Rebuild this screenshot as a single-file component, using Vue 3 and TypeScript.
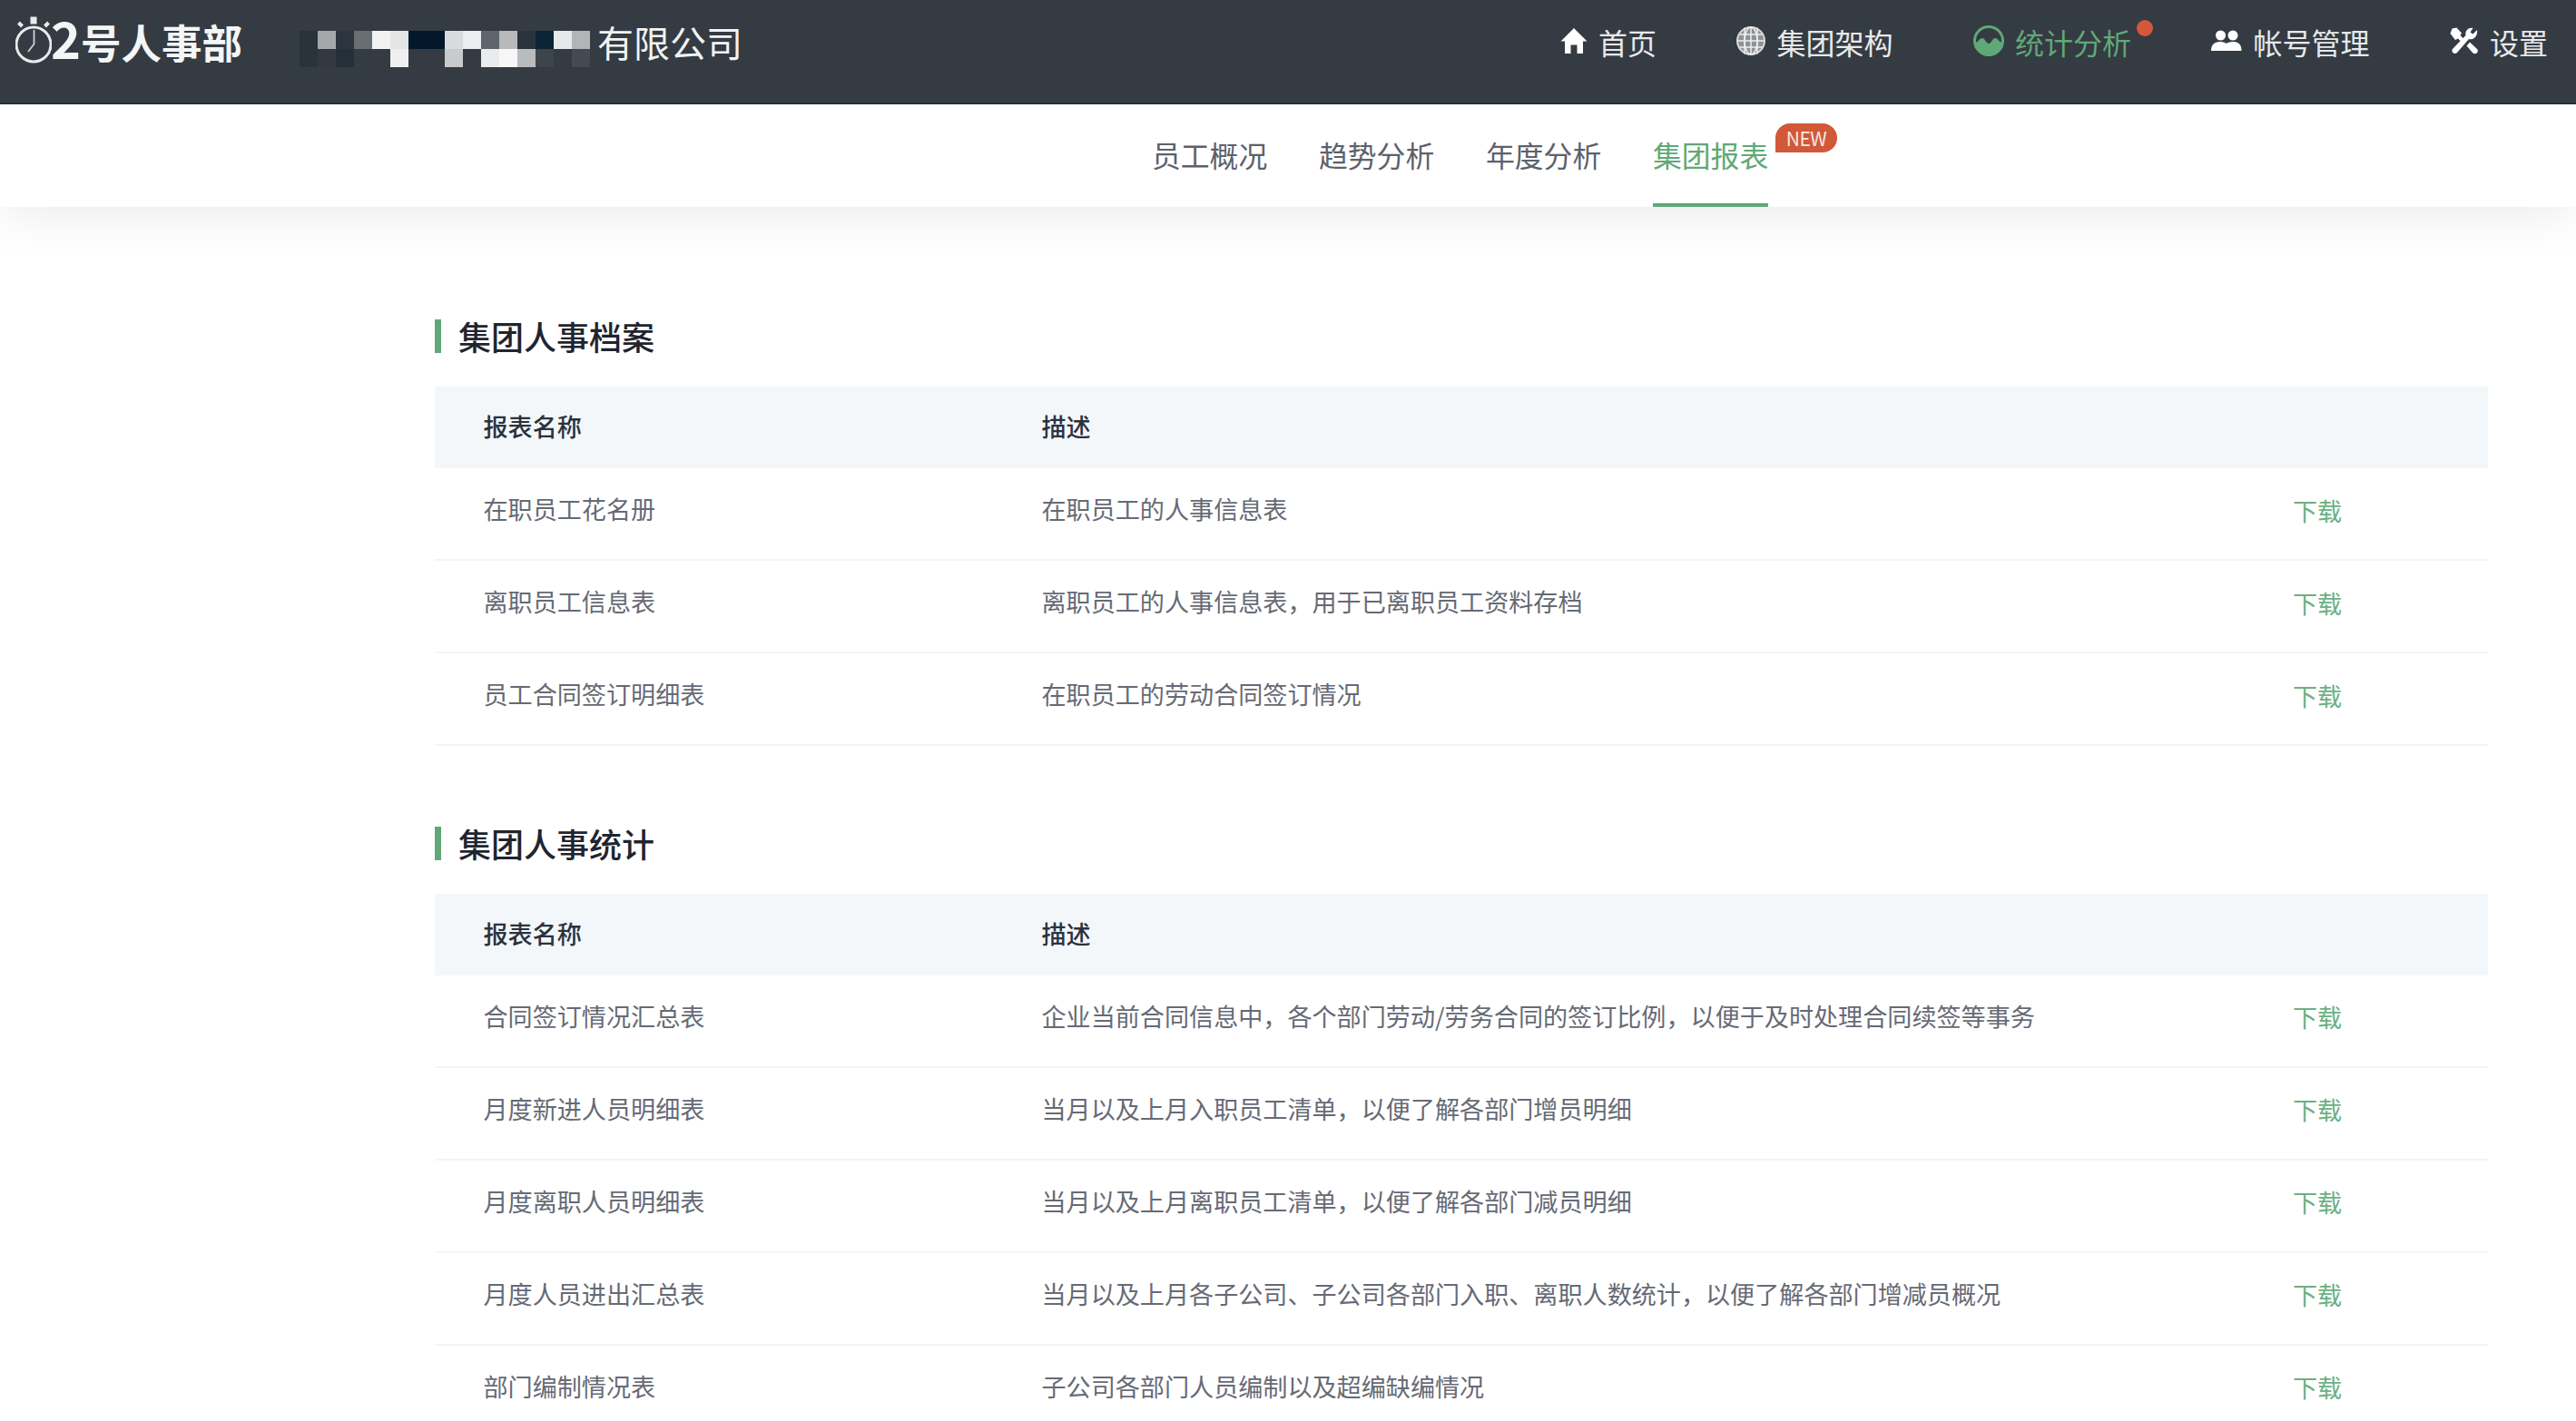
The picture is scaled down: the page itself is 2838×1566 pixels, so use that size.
<script setup lang="ts">
const mosaicTop = ['#2a323a','#a5a8aa','#2c343d','#696e73','#f2f2f2','#e4e5e7','#03182a','#03182a','#d9dadc','#ecedee','#5f656c','#b7b9bb','#2b333c','#0b2435','#e7e8ea','#b3b4b7']
const mosaicBottom = ['#2a323a','#323942','#252f3a','#353b43','#353b43','#efefef','#353b43','#353b43','#c9cacc','#353b43','#ebebeb','#f7f7f7','#b9bcbd','#3d444c','#353b43','#454a52']
const mosaic = [...mosaicTop, ...mosaicBottom]

const subTabs = [
  { label: '员工概况', active: false },
  { label: '趋势分析', active: false },
  { label: '年度分析', active: false },
  { label: '集团报表', active: true },
]

const sections = [
  {
    title: '集团人事档案',
    rows: [
      ['在职员工花名册', '在职员工的人事信息表'],
      ['离职员工信息表', '离职员工的人事信息表，用于已离职员工资料存档'],
      ['员工合同签订明细表', '在职员工的劳动合同签订情况'],
    ],
  },
  {
    title: '集团人事统计',
    rows: [
      ['合同签订情况汇总表', '企业当前合同信息中，各个部门劳动/劳务合同的签订比例，以便于及时处理合同续签等事务'],
      ['月度新进人员明细表', '当月以及上月入职员工清单，以便了解各部门增员明细'],
      ['月度离职人员明细表', '当月以及上月离职员工清单，以便了解各部门减员明细'],
      ['月度人员进出汇总表', '当月以及上月各子公司、子公司各部门入职、离职人数统计，以便了解各部门增减员概况'],
      ['部门编制情况表', '子公司各部门人员编制以及超编缺编情况'],
    ],
  },
]
</script>

<template>
  <div class="page">
    <header class="topbar">
      <div class="logo">
        <svg class="watch" viewBox="0 0 40 56" width="40" height="56" fill="none" stroke="#e9eaeb">
          <circle cx="20" cy="33" r="19" stroke-width="3" />
          <path d="M16.5 2.5h7v8h-7z" fill="#e9eaeb" stroke="none" />
          <path d="M3.5 9l4 4M36.500 9l-4 4" stroke-width="4" />
          <path d="M20.500 17v15.500L14 41" stroke-width="1.800" stroke="#cfd1d3" />
        </svg>
        <span class="logo-text"><span class="logo-two">2</span>号人事部</span>
      </div>
      <div class="mosaic">
        <i v-for="(c, i) in mosaic" :key="i" :style="{ background: c }"></i>
      </div>
      <div class="company">有限公司</div>

      <nav class="nav">
        <a class="nav-item">
          <svg class="icon" width="30" height="30" viewBox="0 0 30 30" fill="#fff">
            <path d="M15 1 L29.500 15.500 H25 V29 H18.500 V19.500 H11.500 V29 H5 V15.500 H0.500 Z" />
          </svg>
          <span>首页</span>
        </a>
        <a class="nav-item">
          <svg class="icon" width="32" height="32" viewBox="0 0 32 32" fill="none" stroke="#d9dadc" stroke-width="1.500">
            <circle cx="16" cy="16" r="15" fill="#8f9295" stroke-width="2" />
            <ellipse cx="16" cy="16" rx="7" ry="15" stroke="#eee" />
            <path d="M16 1v30M1.500 16h29M3.500 9h25M3.500 23h25M9 1.500v29M23 1.500v29" stroke="#eee" />
          </svg>
          <span>集团架构</span>
        </a>
        <a class="nav-item active">
          <svg class="icon" width="34" height="34" viewBox="0 0 34 34">
            <circle cx="17" cy="17" r="15.500" fill="none" stroke="#5fa877" stroke-width="3" />
            <path d="M2 19 C5 19 7 14 10 14 C13 14 14 20 17 20 C20 20 21 14 24 14 C27 14 29 19 32 19 A15 15 0 0 1 2 19 Z" fill="#5fa877" />
          </svg>
          <span>统计分析</span>
          <i class="dot"></i>
        </a>
        <a class="nav-item">
          <svg class="icon" width="34" height="24" viewBox="0 0 34 24" fill="#fff">
            <circle cx="10.500" cy="6" r="5.500" />
            <circle cx="24" cy="6" r="5.500" />
            <path d="M0 23 C0 15 5 13 10.500 13 C13.500 13 15.500 14 16.500 15 C18 14 20.500 13 24 13 C29 13 33.500 15 33.500 23 Z" />
          </svg>
          <span>帐号管理</span>
        </a>
        <a class="nav-item">
          <svg class="icon" width="32" height="30" viewBox="0 0 32 30" fill="#fff">
            <path d="M30 3 L25.500 7.500 L22.500 5.500 L25.500 1 C20.500 0 16.500 4 17.500 9 L3 24 C1 27 5 31 8 28 L21 13 C26 14.500 31 9.500 30 3 Z" />
            <path d="M2.500 1.500 L7.500 0.500 L13 6.500 L11.500 9 L17.500 15 L15 18.500 L9 12.500 L6 14 L0.500 7 Z" />
            <path d="M18.500 20.500 L22 16.500 L30.500 24.500 C32 28 28 31 25 28 Z" />
          </svg>
          <span>设置</span>
        </a>
      </nav>
    </header>

    <div class="subnav">
      <a v-for="t in subTabs" :key="t.label" class="tab" :class="{ on: t.active }">
        {{ t.label }}
        <span v-if="t.active" class="new">NEW</span>
      </a>
    </div>

    <main class="main">
      <section v-for="s in sections" :key="s.title" class="section">
        <h2 class="title">{{ s.title }}</h2>
        <div class="grid head">
          <div class="c1">报表名称</div>
          <div>描述</div>
          <div></div>
        </div>
        <div v-for="r in s.rows" :key="r[0]" class="grid row">
          <div class="c1">{{ r[0] }}</div>
          <div>{{ r[1] }}</div>
          <a class="dl">下载</a>
        </div>
      </section>
    </main>
  </div>
</template>

<style>
html, body { margin: 0; background: #fff; overflow: hidden; }
</style>

<style scoped>
.page {
  width: 2838px;
  height: 1566px;
  overflow: hidden;
  background: #fff;
  font-family: "Noto Sans CJK SC", "Noto Sans", sans-serif;
}
.topbar {
  height: 115px;
  box-sizing: border-box;
  display: flex;
  align-items: flex-start;
  background: #353b43;
  border-bottom: 2px solid #1f303d;
  color: #fff;
}
.logo {
  display: flex;
  align-items: flex-start;
  margin: 16px 0 0 17px;
  width: 313px;
  flex: none;
}
.watch { flex: none; }
.logo-text {
  font-size: 44.5px;
  font-weight: 700;
  line-height: 56px;
  color: #f4f5f5;
  white-space: nowrap;
  margin-top: -3px;
  margin-left: -1px;
}
.logo-two { font-size: 56px; line-height: 56px; display: inline-block; }
.mosaic {
  display: grid;
  grid-template-columns: repeat(16, 20px);
  grid-auto-rows: 20px;
  margin-top: 34px;
  width: 320px;
  flex: none;
}
.mosaic i { display: block; }
.company {
  font-size: 40px;
  line-height: 56px;
  margin: 18px 0 0 8px;
  color: #f2f3f3;
  white-space: nowrap;
}
.nav {
  margin-left: auto;
  display: flex;
  gap: 88.5px;
  padding-right: 31px;
  height: 92px;
  align-items: center;
}
.nav-item {
  position: relative;
  display: flex;
  align-items: center;
  gap: 12px;
  font-size: 32px;
  line-height: 44px;
  color: #e8e9ea;
  white-space: nowrap;
}
.nav-item .icon { flex: none; position: relative; top: -1px; }
.nav-item.active { color: #5fa877; }
.dot {
  position: absolute;
  right: -24px;
  top: -2px;
  width: 18px;
  height: 18px;
  border-radius: 50%;
  background: #d4573a;
}
.subnav {
  height: 113px;
  box-sizing: border-box;
  display: flex;
  gap: 56.8px;
  padding-left: 1269px;
  background: #fff;
  box-shadow: 0 4px 60px rgba(0, 0, 0, 0.095);
  clip-path: inset(0 0 -70px 0);
  position: relative;
}
.tab {
  position: relative;
  height: 113px;
  box-sizing: border-box;
  line-height: 110px;
  font-size: 31.8px;
  color: #5c616c;
  white-space: nowrap;
}
.tab.on { color: #5fa877; border-bottom: 4px solid #5fa877; }
.new {
  position: absolute;
  left: 135px;
  top: 21px;
  width: 68px;
  height: 32px;
  border-radius: 16px 16px 16px 0;
  background: #d2583a;
  color: #f6e9e4;
  font-size: 21px;
  line-height: 32px;
  text-align: center;
  letter-spacing: -0.5px;
}
.main {
  padding: 124px 97px 0 479px;
}
.section + .section { margin-top: 88.5px; }
.title {
  margin: 0 0 37px;
  height: 37px;
  border-left: 7px solid #5fa877;
  padding-left: 19px;
  font-size: 36px;
  line-height: 37px;
  font-weight: 500;
  color: #1f2530;
}
.grid {
  display: grid;
  grid-template-columns: 668.500px 1378.500px 1fr;
  align-items: center;
  font-size: 27.1px;
}
.c1 { padding-left: 53.500px; }
.head {
  height: 90px;
  padding-bottom: 3px;
  box-sizing: border-box;
  background: #f4f7f9;
  color: #2b323e;
  font-weight: 500;
}
.row {
  height: 102px;
  box-sizing: border-box;
  padding-bottom: 11px;
  border-bottom: 2px solid #f2f5f8;
  color: #666a75;
}
.dl { color: #6bb083; margin-top: 3px; }
</style>
